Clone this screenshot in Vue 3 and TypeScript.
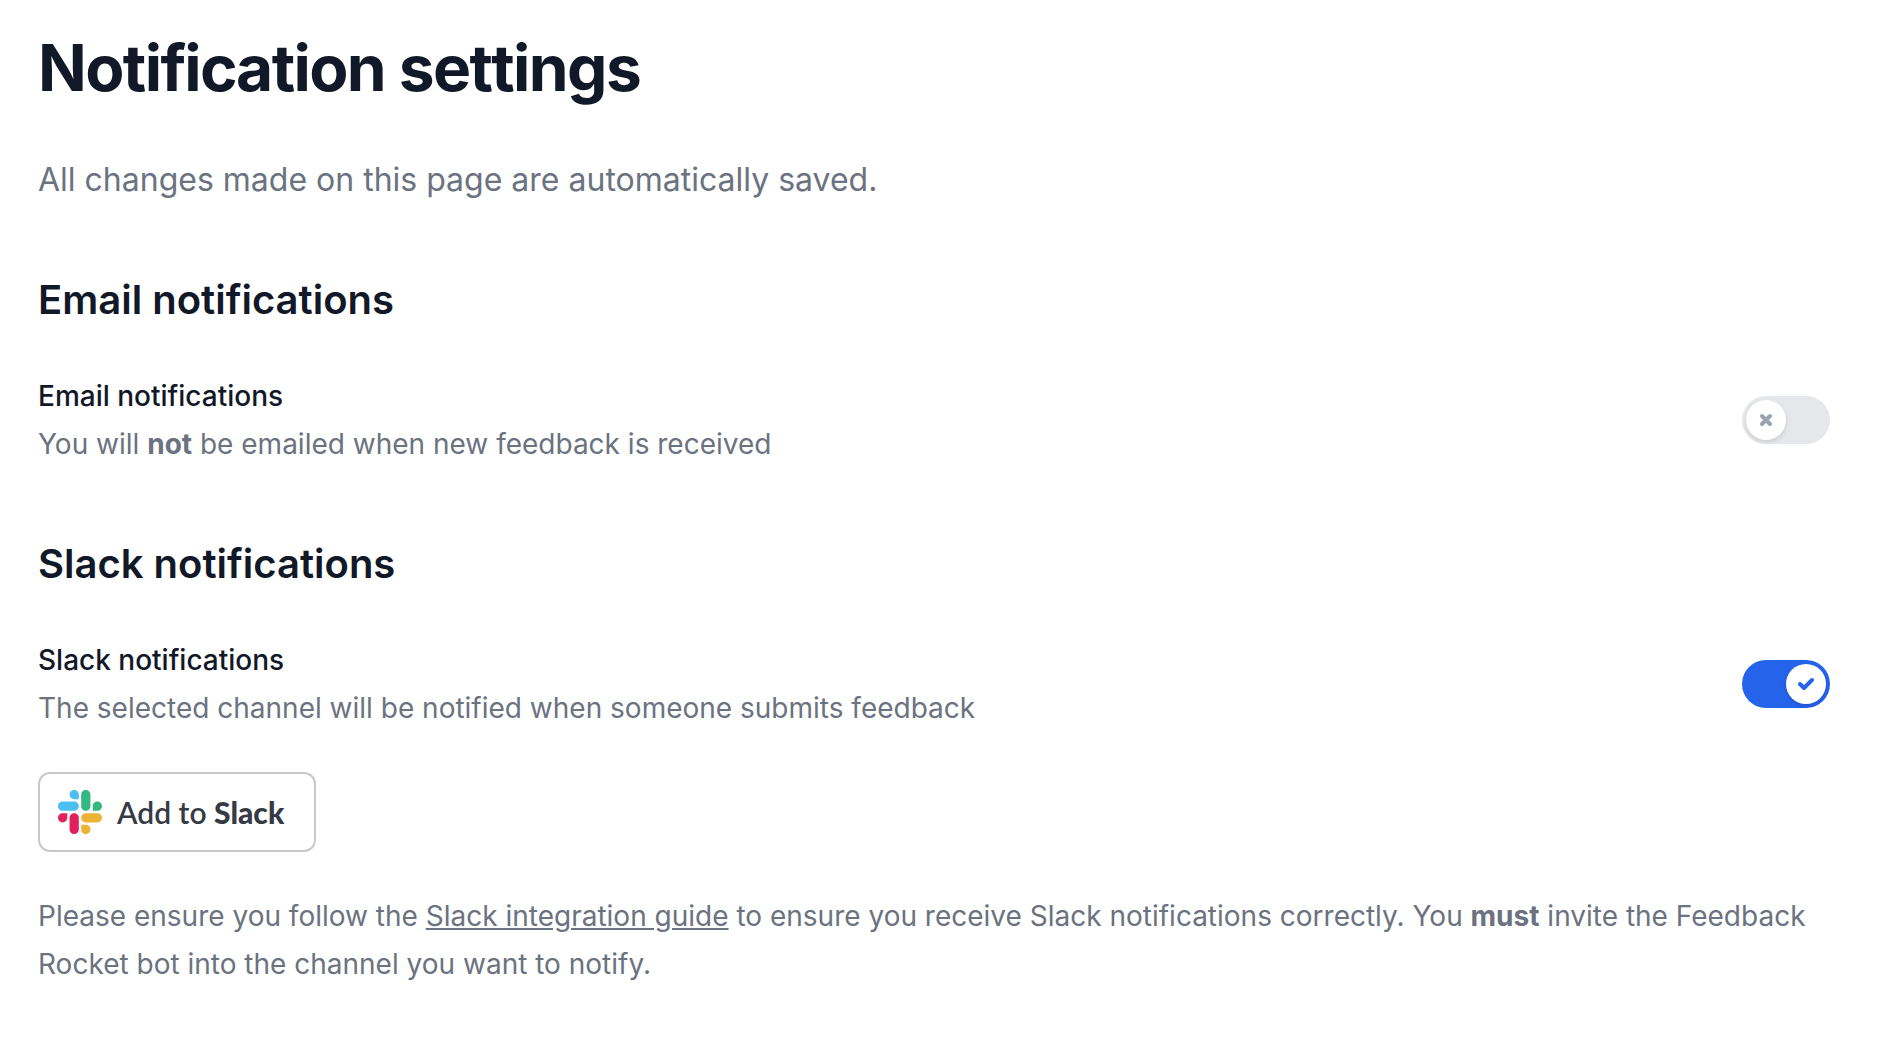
<script setup lang="ts">
import { ref } from 'vue'

const email = ref(false)
const slack = ref(true)
</script>

<template>
  <main class="page">
    <h1>Notification settings</h1>
    <p class="intro">All changes made on this page are automatically saved.</p>

    <section>
      <h2>Email notifications</h2>
      <div class="row">
        <div class="copy">
          <label for="email">Email notifications</label>
          <p>You will <strong v-if="!email">not</strong> be emailed when new feedback is received</p>
        </div>
        <span class="switch">
          <input id="email" v-model="email" type="checkbox" role="switch" />
          <span class="knob">
            <svg v-if="email" viewBox="0 0 12 12" fill="none" stroke="currentColor" stroke-width="2" stroke-linecap="round" stroke-linejoin="round"><path d="M3 6l2 2 4-4" /></svg>
            <svg v-else viewBox="0 0 12 12" fill="none" stroke="currentColor" stroke-width="2" stroke-linecap="round" stroke-linejoin="round"><path d="M4 8l4-4M4 4l4 4" /></svg>
          </span>
        </span>
      </div>
    </section>

    <section>
      <h2>Slack notifications</h2>
      <div class="row">
        <div class="copy">
          <label for="slack">Slack notifications</label>
          <p>The selected channel will be notified when someone submits feedback</p>
        </div>
        <span class="switch">
          <input id="slack" v-model="slack" type="checkbox" role="switch" />
          <span class="knob">
            <svg v-if="slack" viewBox="0 0 12 12" fill="none" stroke="currentColor" stroke-width="2" stroke-linecap="round" stroke-linejoin="round"><path d="M3 6l2 2 4-4" /></svg>
            <svg v-else viewBox="0 0 12 12" fill="none" stroke="currentColor" stroke-width="2" stroke-linecap="round" stroke-linejoin="round"><path d="M4 8l4-4M4 4l4 4" /></svg>
          </span>
        </span>
      </div>
      <button type="button" class="add">
        <svg viewBox="0 0 122.8 122.8" aria-hidden="true">
          <path fill="#e3205e" d="M25.8 77.6c0 7.1-5.8 12.9-12.9 12.9S0 84.7 0 77.6s5.8-12.9 12.9-12.9h12.9v12.9zm6.5 0c0-7.1 5.8-12.9 12.9-12.9s12.9 5.8 12.9 12.9v32.3c0 7.1-5.8 12.9-12.9 12.9s-12.9-5.8-12.9-12.9V77.6z" />
          <path fill="#4cbff0" d="M45.2 25.8c-7.1 0-12.9-5.8-12.9-12.9S38.1 0 45.2 0s12.9 5.8 12.9 12.9v12.9H45.2zm0 6.5c7.1 0 12.9 5.8 12.9 12.9s-5.8 12.9-12.9 12.9H12.9C5.8 58.1 0 52.3 0 45.2s5.8-12.9 12.9-12.9h32.3z" />
          <path fill="#34b882" d="M97 45.2c0-7.1 5.8-12.9 12.9-12.9s12.9 5.8 12.9 12.9-5.8 12.9-12.9 12.9H97V45.2zm-6.5 0c0 7.1-5.8 12.9-12.9 12.9s-12.9-5.8-12.9-12.9V12.9C64.7 5.8 70.5 0 77.6 0s12.9 5.8 12.9 12.9v32.3z" />
          <path fill="#ebb435" d="M77.6 97c7.1 0 12.9 5.8 12.9 12.9s-5.8 12.9-12.9 12.9-12.9-5.8-12.9-12.9V97h12.9zm0-6.5c-7.1 0-12.9-5.8-12.9-12.9s5.8-12.9 12.9-12.9h32.3c7.1 0 12.9 5.8 12.9 12.9s-5.8 12.9-12.9 12.9H77.6z" />
        </svg>
        <span>Add to <strong>Slack</strong></span>
      </button>
      <p class="note">
        Please ensure you follow the <a href="#guide">Slack integration guide</a> to ensure you receive Slack
        notifications correctly. You <strong>must</strong> invite the Feedback Rocket bot into the channel you want to
        notify.
      </p>
    </section>
  </main>
</template>

<style>
body {
  background: #fff;
}
</style>

<style scoped>
.page {
  padding: 32px 50px 32px 38px;
  font-family: Inter, sans-serif;
  font-size: 28px;
  line-height: 48px;
  color: #6b7280;
}
h1,
h2,
p {
  margin: 0;
}
h1,
h2,
label {
  color: #111827;
}
h1 {
  font-size: 64px;
  line-height: 72px;
  font-weight: 700;
  letter-spacing: -0.025em;
  font-kerning: none;
}
.intro {
  margin-top: 48px;
  font-size: 32px;
  line-height: 56px;
}
h2 {
  font-size: 40px;
  line-height: 56px;
  font-weight: 600;
}
section {
  margin-top: 64px;
}
section + section {
  margin-top: 68px;
}
.row {
  display: flex;
  align-items: center;
  justify-content: space-between;
  margin-top: 44px;
}
.copy label {
  display: block;
  font-weight: 500;
}
strong {
  font-weight: 700;
}
.switch {
  position: relative;
  flex: none;
  width: 88px;
  height: 48px;
}
.switch input {
  appearance: none;
  display: block;
  width: 100%;
  height: 100%;
  margin: 0;
  border-radius: 24px;
  background: #e5e7eb;
  cursor: pointer;
}
.switch input:checked {
  background: #2563eb;
}
.knob {
  position: absolute;
  top: 4px;
  left: 4px;
  display: grid;
  place-items: center;
  width: 40px;
  height: 40px;
  border-radius: 50%;
  background: #fff;
  color: #9ca3af;
  box-shadow: 0 2px 4px rgba(0, 0, 0, 0.12);
  pointer-events: none;
}
input:checked + .knob {
  left: 44px;
  color: #2563eb;
}
.knob svg {
  width: 24px;
  height: 24px;
}
.add {
  display: flex;
  align-items: center;
  gap: 15px;
  height: 80px;
  margin-top: 40px;
  padding: 0 30px 0 18px;
  border: 2px solid #c8c8ce;
  border-radius: 12px;
  background: #fff;
  color: #363a45;
  font: 600 30px Lato, sans-serif;
  cursor: pointer;
}
.add strong {
  font-weight: 900;
}
.add svg {
  width: 44px;
  height: 44px;
}
.note {
  margin-top: 40px;
}
.note a {
  color: inherit;
}
</style>
